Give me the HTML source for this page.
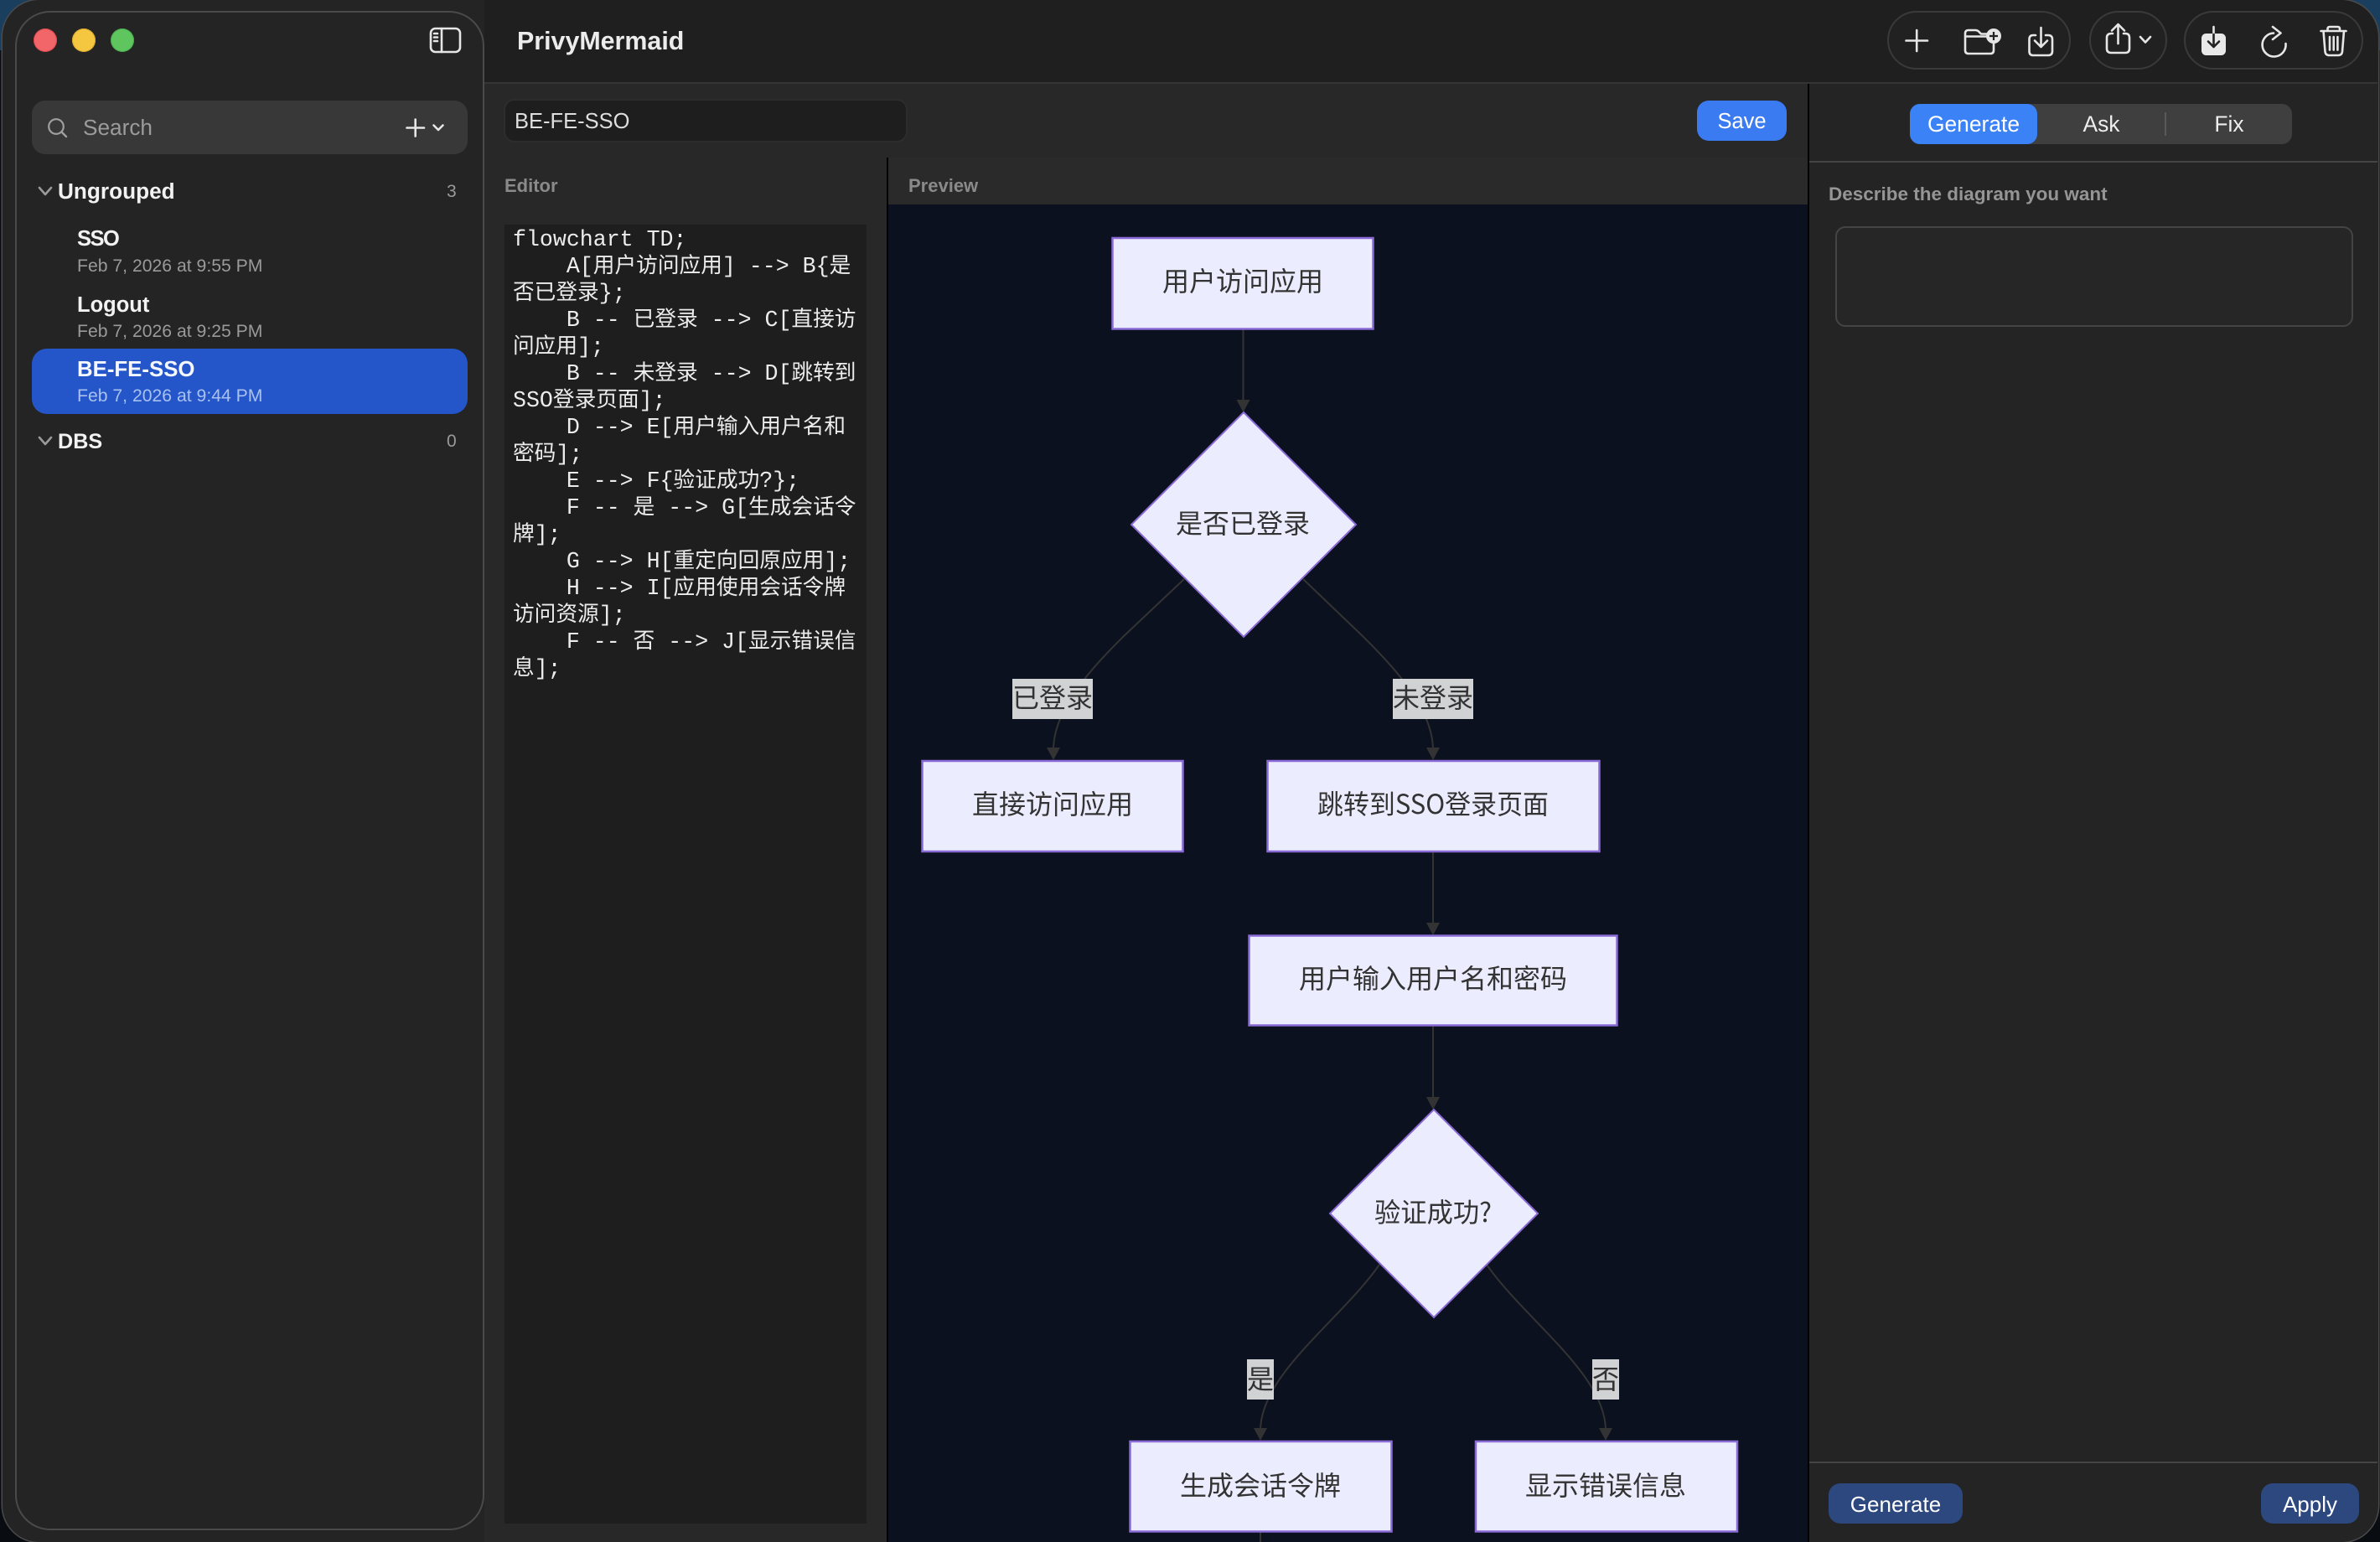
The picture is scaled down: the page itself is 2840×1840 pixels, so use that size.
<!DOCTYPE html>
<html lang="zh">
<head>
<meta charset="utf-8">
<title>PrivyMermaid</title>
<style>
html,body{margin:0;padding:0;width:2840px;height:1840px;overflow:hidden;background:#090d12;}
*{box-sizing:border-box;}
body{font-family:"Liberation Sans","Noto Sans CJK SC",sans-serif;position:relative;}
.a{position:absolute;}
.t{position:absolute;white-space:pre;}
#bgc{position:absolute;left:0;top:0;width:2840px;height:60px;background:linear-gradient(90deg,#1a3f5e 0,#1a3f5e 44px,#090d12 44px,#090d12 2790px,#1a3f5e 2790px);}
#win{position:absolute;left:3px;top:0;width:2835px;height:1840px;border-radius:44px;background:#242424;overflow:hidden;box-shadow:0 0 0 1.5px #4a4a4a;}
.b{font-weight:bold;}
.code div{height:32px;line-height:32px;white-space:pre;font-family:"Liberation Mono","Noto Sans CJK SC",monospace;font-size:26.6px;color:#ececec;}
.code i{font-style:normal;font-family:"Noto Sans CJK SC","Liberation Sans",sans-serif;font-size:25.7px;line-height:0;}
.dt{font-family:"Noto Sans CJK SC","Liberation Sans",sans-serif;font-size:32px;fill:#333;text-anchor:middle;}
.node{fill:#ececff;stroke:#8a6ad6;stroke-width:2.5;}
.dia{fill:#ececff;stroke:#8a6ad6;stroke-width:2;}
.edge{fill:none;stroke:#333;stroke-width:2;}
.ic{fill:none;stroke:#e6e6e6;stroke-width:2.6;stroke-linecap:round;stroke-linejoin:round;}
</style>
</head>
<body>
<div id="bgc"></div>
<div id="win"></div>

<!-- main areas -->
<div class="a" style="left:578px;top:0;width:2259px;height:98px;background:#1f1f1f;border-top-right-radius:44px;"></div>
<div class="a" style="left:578px;top:98px;width:2259px;height:2px;background:#353535;"></div>
<div class="a" style="left:578px;top:100px;width:1579px;height:1740px;background:#282828;"></div>
<div class="a" style="left:2159px;top:100px;width:678px;height:1740px;background:#242424;border-bottom-right-radius:44px;"></div>

<!-- sidebar panel -->
<div class="a" style="left:18px;top:13px;width:560px;height:1813px;border:2px solid #4a4a4a;border-radius:42px;background:#242424;"></div>
<div class="a" style="left:40px;top:34px;width:28px;height:28px;border-radius:50%;background:#f2666a;box-shadow:inset 0 0 0 1px #d8474c;"></div>
<div class="a" style="left:86px;top:34px;width:28px;height:28px;border-radius:50%;background:#f5c63f;box-shadow:inset 0 0 0 1px #d9a92c;"></div>
<div class="a" style="left:132px;top:34px;width:28px;height:28px;border-radius:50%;background:#5fc65f;box-shadow:inset 0 0 0 1px #4aa84c;"></div>

<div class="a" style="left:38px;top:120px;width:520px;height:64px;background:#383838;border-radius:16px;"></div>
<div class="t" style="left:99px;top:132px;line-height:40px;font-size:26.2px;color:#9c9c9c;">Search</div>

<div class="t b" style="left:69px;top:208px;line-height:40px;font-size:26.2px;color:#f2f2f2;">Ungrouped</div>
<div class="t" style="left:533px;top:209px;line-height:40px;font-size:21px;color:#9a9a9a;">3</div>
<div class="t b" style="left:92px;top:265px;line-height:40px;font-size:25.5px;letter-spacing:-1.5px;color:#f2f2f2;">SSO</div>
<div class="t" style="left:92px;top:298px;line-height:40px;font-size:21.2px;color:#9a9a9a;">Feb 7, 2026 at 9:55 PM</div>
<div class="t b" style="left:92px;top:344px;line-height:40px;font-size:25.5px;color:#f2f2f2;">Logout</div>
<div class="t" style="left:92px;top:376px;line-height:40px;font-size:21.2px;color:#9a9a9a;">Feb 7, 2026 at 9:25 PM</div>
<div class="a" style="left:38px;top:416px;width:520px;height:78px;background:#2456c9;border-radius:18px;"></div>
<div class="t b" style="left:92px;top:421px;line-height:40px;font-size:25.8px;color:#f5f7ff;">BE-FE-SSO</div>
<div class="t" style="left:92px;top:453px;line-height:40px;font-size:21.2px;color:#a9c1f0;">Feb 7, 2026 at 9:44 PM</div>
<div class="t b" style="left:69px;top:507px;line-height:40px;font-size:25.2px;color:#f2f2f2;">DBS</div>
<div class="t" style="left:533px;top:507px;line-height:40px;font-size:21px;color:#9a9a9a;">0</div>

<!-- title -->
<div class="t b" style="left:617px;top:29px;line-height:40px;font-size:30.4px;color:#ececec;">PrivyMermaid</div>

<!-- name field / save -->
<div class="a" style="left:601px;top:118px;width:482px;height:52px;background:#1e1e1e;border:2px solid #2d2d2d;border-radius:13px;"></div>
<div class="t" style="left:614px;top:125px;line-height:40px;font-size:25.5px;color:#dedede;">BE-FE-SSO</div>
<div class="a" style="left:2025px;top:120px;width:107px;height:48px;background:#3b7bf2;border-radius:14px;"></div>
<div class="t" style="left:2025px;top:125px;width:107px;text-align:center;line-height:40px;font-size:25.5px;color:#fff;">Save</div>

<!-- editor -->
<div class="t b" style="left:602px;top:202px;line-height:40px;font-size:22px;color:#8a8a8a;">Editor</div>
<div class="a" style="left:602px;top:268px;width:432px;height:1550px;background:#1e1e1e;"></div>
<div class="a code" style="left:612px;top:270px;width:420px;">
<div>flowchart TD;</div>
<div>    A[<i>用户访问应用</i>] --&gt; B{<i>是</i></div>
<div><i>否已登录</i>};</div>
<div>    B -- <i>已登录</i> --&gt; C[<i>直接访</i></div>
<div><i>问应用</i>];</div>
<div>    B -- <i>未登录</i> --&gt; D[<i>跳转到</i></div>
<div>SSO<i>登录页面</i>];</div>
<div>    D --&gt; E[<i>用户输入用户名和</i></div>
<div><i>密码</i>];</div>
<div>    E --&gt; F{<i>验证成功</i>?};</div>
<div>    F -- <i>是</i> --&gt; G[<i>生成会话令</i></div>
<div><i>牌</i>];</div>
<div>    G --&gt; H[<i>重定向回原应用</i>];</div>
<div>    H --&gt; I[<i>应用使用会话令牌</i></div>
<div><i>访问资源</i>];</div>
<div>    F -- <i>否</i> --&gt; J[<i>显示错误信</i></div>
<div><i>息</i>];</div>
</div>

<!-- dividers -->
<div class="a" style="left:1058px;top:188px;width:2px;height:1652px;background:#000;"></div>
<div class="a" style="left:2157px;top:100px;width:2px;height:1740px;background:#000;"></div>

<!-- preview -->
<div class="a" style="left:1060px;top:188px;width:1097px;height:56px;background:#2a2a2a;"></div>
<div class="t b" style="left:1084px;top:202px;line-height:40px;font-size:22px;color:#8a8a8a;">Preview</div>
<div class="a" style="left:1060px;top:244px;width:1097px;height:1596px;background:#0c111f;"></div>

<!-- right panel -->
<div class="a" style="left:2159px;top:192px;width:678px;height:2px;background:#444;"></div>
<div class="a" style="left:2279px;top:124px;width:456px;height:48px;background:#3f3f3f;border-radius:12px;"></div>
<div class="a" style="left:2279px;top:124px;width:152px;height:48px;background:#3b82f6;border-radius:12px;"></div>
<div class="a" style="left:2583px;top:134px;width:2px;height:28px;background:#5a5a5a;"></div>
<div class="t" style="left:2279px;top:128px;width:152px;text-align:center;line-height:40px;font-size:26.4px;color:#fff;">Generate</div>
<div class="t" style="left:2431px;top:128px;width:153px;text-align:center;line-height:40px;font-size:26.4px;color:#eee;">Ask</div>
<div class="t" style="left:2585px;top:128px;width:150px;text-align:center;line-height:40px;font-size:26.4px;color:#eee;">Fix</div>
<div class="t b" style="left:2182px;top:212px;line-height:40px;font-size:22.5px;color:#959595;">Describe the diagram you want</div>
<div class="a" style="left:2190px;top:270px;width:618px;height:120px;border:2px solid #444;border-radius:12px;background:#262626;"></div>
<div class="a" style="left:2159px;top:1744px;width:678px;height:2px;background:#444;"></div>
<div class="a" style="left:2182px;top:1770px;width:160px;height:48px;background:#2c487e;border-radius:14px;"></div>
<div class="t" style="left:2182px;top:1775px;width:160px;text-align:center;line-height:40px;font-size:26px;color:#fff;">Generate</div>
<div class="a" style="left:2698px;top:1770px;width:117px;height:48px;background:#2c487e;border-radius:14px;"></div>
<div class="t" style="left:2698px;top:1775px;width:117px;text-align:center;line-height:40px;font-size:26px;color:#fff;">Apply</div>

<!-- toolbar pills -->
<div class="a" style="left:2252px;top:13px;width:219px;height:70px;border:2px solid #3a3a3a;border-radius:35px;background:#212121;"></div>
<div class="a" style="left:2493px;top:13px;width:93px;height:70px;border:2px solid #3a3a3a;border-radius:35px;background:#212121;"></div>
<div class="a" style="left:2606px;top:13px;width:214px;height:70px;border:2px solid #3a3a3a;border-radius:35px;background:#212121;"></div>

<!-- all vector overlay -->
<svg class="a" style="left:0;top:0;" width="2840" height="1840" viewBox="0 0 2840 1840">
  <!-- sidebar toggle -->
  <rect class="ic" x="514" y="34" width="35" height="28" rx="5.5"/>
  <path class="ic" d="M527 34V62"/>
  <path class="ic" stroke-width="2" d="M518 40H522M518 44.5H522M518 49H522"/>
  <!-- search -->
  <circle cx="67" cy="151" r="8.8" fill="none" stroke="#a0a0a0" stroke-width="2.2"/>
  <path d="M73.5 157.5L79 163" fill="none" stroke="#a0a0a0" stroke-width="2.4" stroke-linecap="round"/>
  <path class="ic" d="M485.5 152.5H506M495.7 142.5V162.5"/>
  <path class="ic" d="M517.5 149.5L523 155L528.5 149.5"/>
  <path d="M47 224L54 232L61 224" fill="none" stroke="#9a9a9a" stroke-width="2.6" stroke-linecap="round" stroke-linejoin="round"/>
  <path d="M47 522L54 530L61 522" fill="none" stroke="#9a9a9a" stroke-width="2.6" stroke-linecap="round" stroke-linejoin="round"/>

  <!-- toolbar icons -->
  <path class="ic" d="M2274.5 48.5H2300M2287.2 36V61"/>
  <path class="ic" d="M2374 43.5H2345M2345 43V40Q2345 36 2349 36H2357Q2360 36 2362 38.5L2364 40.5H2371M2345 43V60Q2345 64 2349 64H2375Q2379 64 2379 60V52"/>
  <circle cx="2379" cy="43" r="9" fill="#e6e6e6"/>
  <path d="M2374 43H2384M2379 38V48" stroke="#222" stroke-width="2.2" fill="none"/>
  <path class="ic" d="M2429 42H2426Q2421.5 42 2421.5 47V61Q2421.5 66 2426 66H2444Q2449 66 2449 61V47Q2449 42 2444 42H2441"/>
  <path class="ic" d="M2435.5 33V56M2428 48.5L2435.5 56L2443 48.5"/>
  <path class="ic" d="M2521 40H2519.5Q2514 40 2514 45V58Q2514 63 2519.5 63H2536Q2541 63 2541 58V45Q2541 40 2536 40H2534"/>
  <path class="ic" d="M2527.5 52V29M2520 36.5L2527.5 29L2535 36.5"/>
  <path class="ic" d="M2554 44L2560 50.5L2566 44"/>
  <rect x="2627" y="40" width="29" height="26" rx="5.5" fill="#e8e8e8"/>
  <path class="ic" d="M2641.5 32V41"/>
  <path d="M2641.5 41V56M2635 49.5L2641.5 56L2648 49.5" fill="none" stroke="#222" stroke-width="2.6" stroke-linecap="round" stroke-linejoin="round"/>
  <path class="ic" d="M2727.5 52A14 14 0 1 1 2713 39.5"/>
  <path class="ic" d="M2712 32L2721.5 39.5L2712 47"/>
  <path class="ic" d="M2769.5 37H2799.5M2777.5 37V34.5Q2777.5 32 2780 32H2789.5Q2792 32 2792 34.5V37M2772.5 37L2774.5 61.5Q2775 66 2779.5 66H2790Q2794.5 66 2795 61.5L2797 37"/>
  <path class="ic" stroke-width="2" d="M2780 44V59.5M2784.7 44V59.5M2789.4 44V59.5"/>

  <!-- flowchart -->
  <g>
    <path class="edge" d="M1483.5 393V480"/>
    <path fill="#333" d="M1475.5 477H1491.5L1483.5 492Z"/>
    <path class="edge" d="M1413 691L1340 760C1305 795 1257 845 1257 895"/>
    <path fill="#333" d="M1249 892H1265L1257 907Z"/>
    <path class="edge" d="M1555 691L1627 760C1662 795 1710 845 1710 895"/>
    <path fill="#333" d="M1702 892H1718L1710 907Z"/>
    <path class="edge" d="M1710 1017V1104"/>
    <path fill="#333" d="M1702 1101H1718L1710 1116Z"/>
    <path class="edge" d="M1710 1224V1312"/>
    <path fill="#333" d="M1702 1309H1718L1710 1324Z"/>
    <path class="edge" d="M1646 1509C1600 1575 1504 1640 1504 1707"/>
    <path fill="#333" d="M1496 1704H1512L1504 1719Z"/>
    <path class="edge" d="M1774 1509C1820 1575 1916 1640 1916 1707"/>
    <path fill="#333" d="M1908 1704H1924L1916 1719Z"/>
    <path class="edge" d="M1504 1828V1840"/>

    <rect class="node" x="1327.5" y="284" width="311" height="108.5"/>
    <polygon class="dia" points="1484,492 1618,626 1484,760 1350,626"/>
    <rect class="node" x="1100.5" y="908" width="311" height="108"/>
    <rect class="node" x="1512.5" y="908" width="396" height="108"/>
    <rect class="node" x="1490.5" y="1116.5" width="439" height="107"/>
    <polygon class="dia" points="1711,1324 1835,1448 1711,1572 1587,1448"/>
    <rect class="node" x="1348.5" y="1720" width="312" height="107.5"/>
    <rect class="node" x="1761" y="1720" width="312" height="107.5"/>

    <rect x="1208" y="810" width="96" height="48" fill="#d1d2d3"/>
    <rect x="1662" y="810" width="96" height="48" fill="#d1d2d3"/>
    <rect x="1488" y="1622" width="32" height="48" fill="#d1d2d3"/>
    <rect x="1900" y="1622" width="32" height="48" fill="#d1d2d3"/>

    <text class="dt" x="1483" y="347">用户访问应用</text>
    <text class="dt" x="1483" y="636">是否已登录</text>
    <text class="dt" x="1256" y="971">直接访问应用</text>
    <text class="dt" x="1710" y="971" textLength="276" lengthAdjust="spacingAndGlyphs">跳转到SSO登录页面</text>
    <text class="dt" x="1710" y="1179">用户输入用户名和密码</text>
    <text class="dt" x="1710" y="1458" textLength="140" lengthAdjust="spacingAndGlyphs">验证成功?</text>
    <text class="dt" x="1504" y="1784">生成会话令牌</text>
    <text class="dt" x="1916" y="1784">显示错误信息</text>
    <text class="dt" x="1256" y="844">已登录</text>
    <text class="dt" x="1710" y="844">未登录</text>
    <text class="dt" x="1504" y="1657">是</text>
    <text class="dt" x="1916" y="1657">否</text>
  </g>
</svg>
</body>
</html>
